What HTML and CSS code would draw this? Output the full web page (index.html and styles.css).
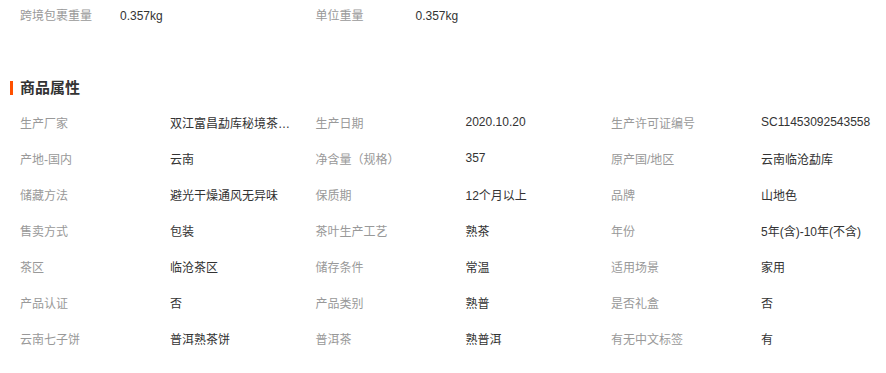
FILE: index.html
```html
<!DOCTYPE html>
<html lang="zh-CN">
<head>
<meta charset="utf-8">
<link rel="stylesheet" href="styles.css">
</head>
<body>
<div class="top-row">
  <div class="top-item"><span class="top-label">跨境包裹重量</span><span class="top-value">0.357kg</span></div>
  <div class="top-item"><span class="top-label">单位重量</span><span class="top-value">0.357kg</span></div>
</div>
<h2 class="section-title"><span class="bar"></span>商品属性</h2>
<div class="attrs">
  <div class="attr"><span class="label">生产厂家</span><span class="value">双江富昌勐库秘境茶…</span></div>
  <div class="attr"><span class="label">生产日期</span><span class="value">2020.10.20</span></div>
  <div class="attr"><span class="label">生产许可证编号</span><span class="value">SC11453092543558</span></div>

  <div class="attr"><span class="label">产地-国内</span><span class="value">云南</span></div>
  <div class="attr"><span class="label">净含量（规格）</span><span class="value">357</span></div>
  <div class="attr"><span class="label">原产国/地区</span><span class="value">云南临沧勐库</span></div>

  <div class="attr"><span class="label">储藏方法</span><span class="value">避光干燥通风无异味</span></div>
  <div class="attr"><span class="label">保质期</span><span class="value">12个月以上</span></div>
  <div class="attr"><span class="label">品牌</span><span class="value">山地色</span></div>

  <div class="attr"><span class="label">售卖方式</span><span class="value">包装</span></div>
  <div class="attr"><span class="label">茶叶生产工艺</span><span class="value">熟茶</span></div>
  <div class="attr"><span class="label">年份</span><span class="value">5年(含)-10年(不含)</span></div>

  <div class="attr"><span class="label">茶区</span><span class="value">临沧茶区</span></div>
  <div class="attr"><span class="label">储存条件</span><span class="value">常温</span></div>
  <div class="attr"><span class="label">适用场景</span><span class="value">家用</span></div>

  <div class="attr"><span class="label">产品认证</span><span class="value">否</span></div>
  <div class="attr"><span class="label">产品类别</span><span class="value">熟普</span></div>
  <div class="attr"><span class="label">是否礼盒</span><span class="value">否</span></div>

  <div class="attr"><span class="label">云南七子饼</span><span class="value">普洱熟茶饼</span></div>
  <div class="attr"><span class="label">普洱茶</span><span class="value">熟普洱</span></div>
  <div class="attr"><span class="label">有无中文标签</span><span class="value">有</span></div>
</div>
</body>
</html>
```
FILE: styles.css
```css
* { box-sizing: border-box; }
body {
  margin: 0;
  background: #fff;
  font-family: "Liberation Sans", "Noto Sans CJK SC", sans-serif;
  font-size: 12px;
  color: #333;
}
.top-row {
  display: grid;
  grid-template-columns: repeat(2, 295.5px);
  padding-left: 20px;
  height: 32px;
  line-height: 32px;
}
.top-item { display: flex; white-space: nowrap; }
.top-label { width: 100px; color: #999; }
.top-value { color: #333; }

.section-title {
  display: flex;
  align-items: center;
  margin: 46px 0 0 0;
  padding-left: 10px;
  height: 20px;
  font-size: 15px;
  font-weight: bold;
  color: #333;
  line-height: 20px;
}
.bar {
  width: 3px;
  height: 14px;
  background: #ff5000;
  margin-right: 7px;
}
.attrs {
  display: grid;
  grid-template-columns: repeat(3, 295.5px);
  grid-auto-rows: 36px;
  padding-left: 20px;
  margin-top: 6px;
}
.attr {
  display: flex;
  align-items: center;
  white-space: nowrap;
}
.label { width: 150px; color: #999; flex: none; }
.value { color: #333; }
```
